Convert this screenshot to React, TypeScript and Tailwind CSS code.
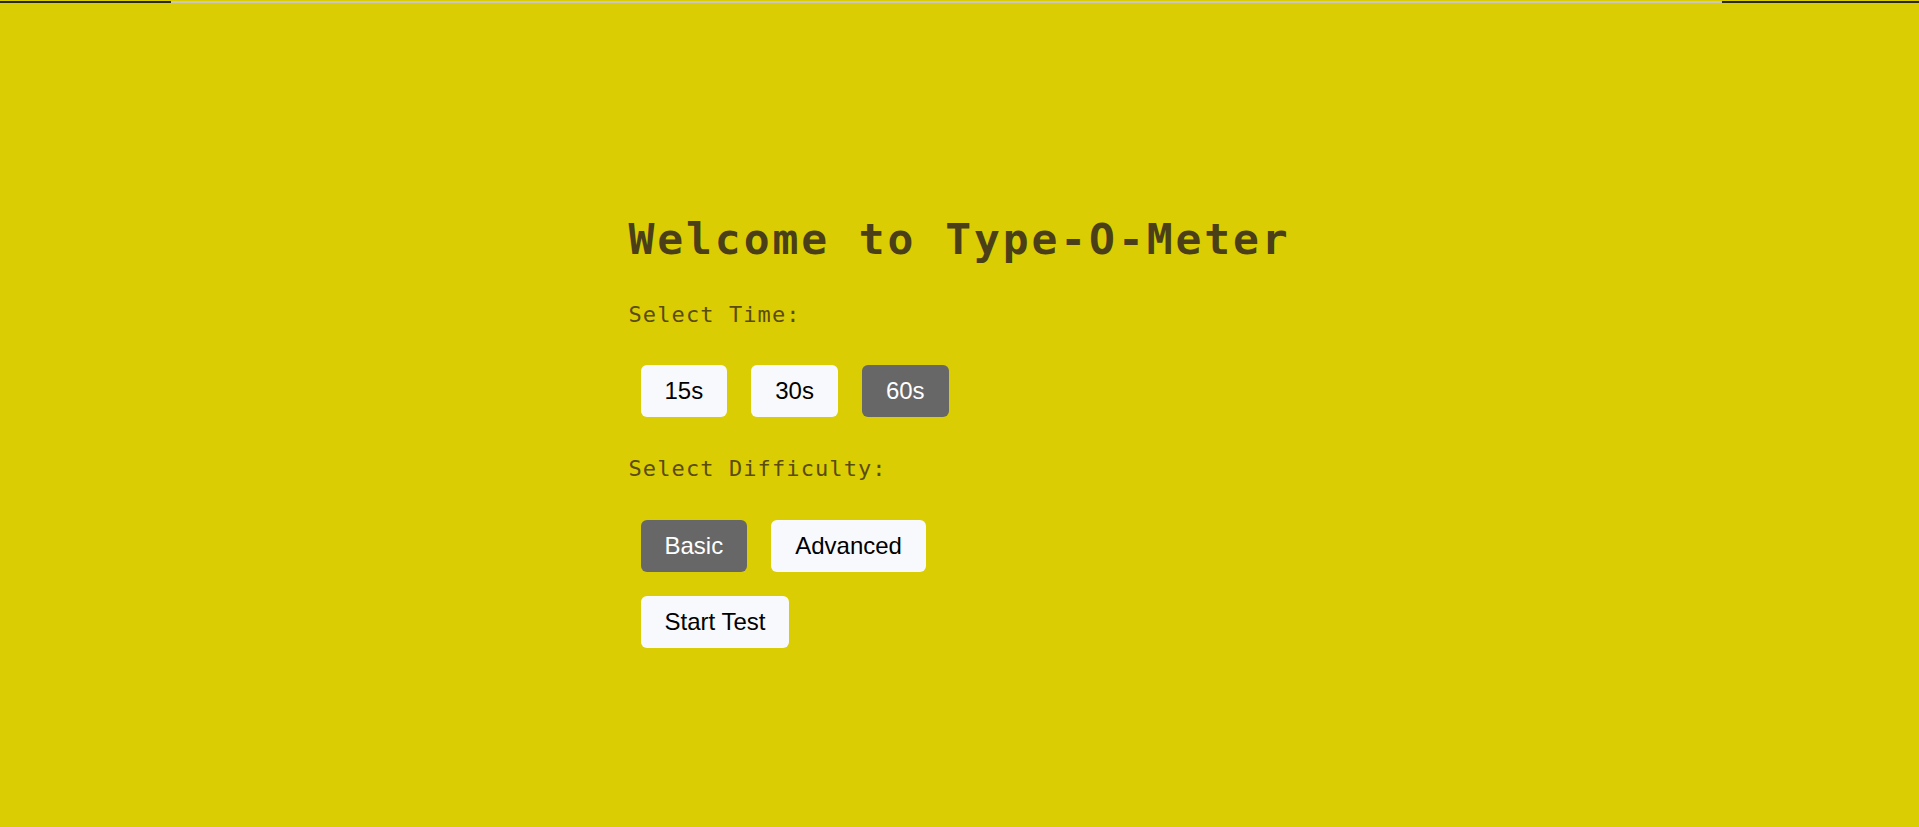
import { useState } from "react";

const times = ["15s", "30s", "60s"];
const levels = ["Basic", "Advanced"];

const Btn = ({ label, active, onClick }: { label: string; active?: boolean; onClick?: () => void }) => (
  <button
    onClick={onClick}
    className={`m-3 h-[52px] px-6 rounded-md text-[24px] leading-[28px] font-['Liberation_Sans',Arial,sans-serif] ${
      active ? "bg-[#676767] text-white" : "bg-[#f7f9fc] text-black"
    }`}
  >
    {label}
  </button>
);

const App = () => {
  const [time, setTime] = useState("60s");
  const [level, setLevel] = useState("Basic");

  return (
    <div className="min-h-screen w-full bg-[#dacd03] flex flex-col">
      {/* progress strip at the very top */}
      <div className="flex w-full pt-px">
        <div className="w-[171px] h-[2px] bg-[#2a2a1a]" />
        <div className="flex-1 h-[2px] bg-[#cbc7ba]" />
        <div className="w-[197px] h-[2px] bg-[#2a2a1a]" />
      </div>

      <div className="w-[662px] mx-auto pt-[211px] font-['DejaVu_Sans_Mono',monospace]">
        <h1 className="text-[43px] leading-[50px] tracking-[2.9px] font-bold text-[#4a3f17] whitespace-nowrap">
          Welcome to Type-O-Meter
        </h1>

        <p className="mt-[38px] text-[22px] leading-[26px] tracking-[1.1px] text-[#5a4c0e]">Select Time:</p>
        <div className="mt-[25px] flex">
          {times.map((t) => (
            <Btn key={t} label={t} active={time === t} onClick={() => setTime(t)} />
          ))}
        </div>

        <p className="mt-[27px] text-[22px] leading-[26px] tracking-[1.1px] text-[#5a4c0e]">Select Difficulty:</p>
        <div className="mt-[26px] flex">
          {levels.map((l) => (
            <Btn key={l} label={l} active={level === l} onClick={() => setLevel(l)} />
          ))}
        </div>
        <div className="flex">
          <Btn label="Start Test" />
        </div>
      </div>
    </div>
  );
};

export default App;
